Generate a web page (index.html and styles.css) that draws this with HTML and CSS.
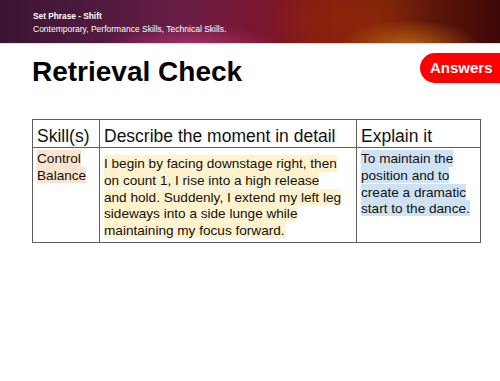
FILE: index.html
```html
<!DOCTYPE html>
<html lang="en">
<head>
<meta charset="utf-8">
<title>Retrieval Check</title>
<link rel="stylesheet" href="styles.css">
</head>
<body>
<header class="banner">
  <div class="banner-title">Set Phrase - Shift</div>
  <div class="banner-sub">Contemporary, Performance Skills, Technical Skills.</div>
</header>
<main class="content">
  <div class="title-row">
    <h1 class="title">Retrieval Check</h1>
    <div class="answers">Answers</div>
  </div>
  <table class="check">
    <colgroup>
      <col class="c1">
      <col class="c2">
      <col class="c3">
    </colgroup>
    <thead>
      <tr>
        <th>Skill(s)</th>
        <th>Describe the moment in detail</th>
        <th>Explain it</th>
      </tr>
    </thead>
    <tbody>
      <tr>
        <td class="cell"><span class="hl hl-peach">Control<br>Balance</span></td>
        <td class="cell cell-desc"><span class="hl hl-yellow">I begin by facing downstage right, then<br>on count 1, I rise into a high release<br>and hold. Suddenly, I extend my left leg<br>sideways into a side lunge while<br>maintaining my focus forward.</span></td>
        <td class="cell"><span class="hl hl-blue">To maintain the<br>position and to<br>create a dramatic<br>start to the dance.</span></td>
      </tr>
    </tbody>
  </table>
</main>
</body>
</html>
```

FILE: styles.css
```css
html, body {
  margin: 0;
  padding: 0;
  background: #ffffff;
}

body {
  font-family: "Liberation Sans", Arial, sans-serif;
  color: #111;
  width: 500px;
  height: 381px;
  overflow: hidden;
}

.banner {
  height: 44px;
  box-sizing: border-box;
  padding: 10px 0 0 33px;
  color: #fff;
  border-bottom: 1px solid #ead9dc;
  background:
    radial-gradient(ellipse 70px 26px at 410px 46px, rgba(205, 115, 20, 0.75), rgba(205, 115, 20, 0) 100%),
    radial-gradient(ellipse 90px 22px at 190px 46px, rgba(190, 55, 115, 0.75), rgba(190, 55, 115, 0) 100%),
    radial-gradient(ellipse 80px 40px at 350px 20px, rgba(150, 40, 10, 0.6), rgba(150, 40, 10, 0) 100%),
    linear-gradient(90deg, #3a1431 0%, #4e1a3e 18%, #6a1d44 38%, #7a1530 52%, #861c12 64%, #7e2608 76%, #5a1408 88%, #3e0808 100%);
}

.banner-title {
  font-size: 8.3px;
  font-weight: bold;
  line-height: 12.5px;
}

.banner-sub {
  font-size: 8.5px;
  line-height: 12.5px;
}

.content {
  padding: 9px 0 0 32px;
}

.title-row {
  display: flex;
  justify-content: space-between;
  align-items: flex-start;
}

.title {
  margin: 5px 0 0 0;
  font-size: 28px;
  line-height: 28px;
  font-weight: bold;
  color: #000;
}

.answers {
  height: 30px;
  line-height: 30px;
  padding: 0 7px 0 10px;
  width: 63px;
  background: #ff0000;
  color: #fff;
  font-weight: bold;
  font-size: 15px;
  border-radius: 15px 0 0 15px;
}

.check {
  margin-top: 33px;
  border-collapse: collapse;
  width: 448px;
  table-layout: fixed;
}

.c1 { width: 67px; }
.c2 { width: 257px; }
.c3 { width: 124px; }

.check th,
.check td {
  border: 1px solid #5e5e5e;
  text-align: left;
  vertical-align: top;
}

.check th {
  font-weight: normal;
  font-size: 17.5px;
  line-height: 20px;
  padding: 6px 4px 1px 4px;
  white-space: nowrap;
}

.cell {
  font-size: 13.6px;
  line-height: 16.6px;
  padding: 3px 4px 3px 4px;
  white-space: nowrap;
}

.cell-desc {
  padding-top: 8px;
}

.hl {
  padding: 0.6px 0;
  -webkit-box-decoration-break: clone;
  box-decoration-break: clone;
}

.hl-peach { background: #fce3d0; }
.hl-yellow { background: #fff2cc; }
.hl-blue { background: #cfe2f3; }
```
